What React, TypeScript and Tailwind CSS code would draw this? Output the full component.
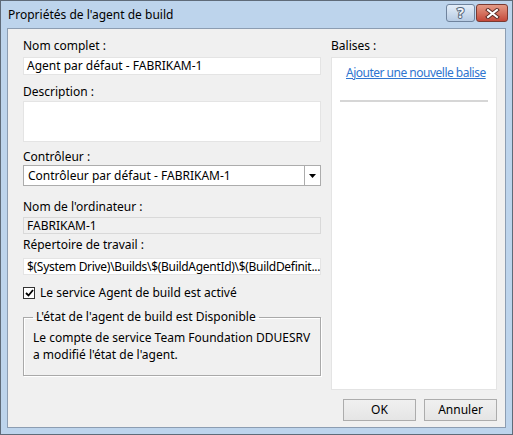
import React from 'react';

const font = 'font-["Noto_Sans","Liberation_Sans",sans-serif] text-[12px]';

function Label({ children, className = '' }: { children: React.ReactNode; className?: string }) {
  return <div className={`h-[16px] leading-[16px] text-black ${className}`}>{children}</div>;
}

export default function App() {
  return (
    <div className={`w-[513px] h-[435px] border border-[#5f6b79] bg-[#bdd4ec] flex flex-col ${font}`}>
      {/* title bar */}
      <div className="h-[27px] flex items-start pl-[7px] pr-[4px]">
        <div className="flex-1 h-[27px] leading-[27px] text-black">Propriétés de l'agent de build</div>
        <div className="flex gap-[1px] mt-[3px]">
          <button className="w-[29px] h-[18px] rounded-[3px] border border-[#6f839d] bg-gradient-to-b from-[#e4eef9] to-[#b7cbe3] flex items-center justify-center">
            <span className="font-bold text-[14px] leading-none text-[#eef2f7] [-webkit-text-stroke:2px_#56667a] [paint-order:stroke]">?</span>
          </button>
          <button className="w-[32px] h-[18px] rounded-[3px] border border-[#7a3a32] bg-gradient-to-b from-[#e39a86] to-[#c4483a] flex items-center justify-center">
            <svg width="15" height="11" viewBox="0 0 15 11">
              <path d="M3 2 L12 9 M12 2 L3 9" stroke="#5a2a24" strokeWidth="4" strokeLinecap="square" />
              <path d="M3 2 L12 9 M12 2 L3 9" stroke="#ffffff" strokeWidth="2" strokeLinecap="square" />
            </svg>
          </button>
        </div>
      </div>

      {/* content */}
      <div className="mx-[6px] mb-[6px] flex-1 border border-[#8c9db2] bg-[#f0f0f0] flex flex-col">
        <div className="h-[361px] flex pl-[15px] pr-[8px]">
          {/* left column */}
          <div className="w-[298px] flex flex-col">
            <Label className="mt-[9px]">Nom complet :</Label>
            <div className="mt-[3px] h-[18px] bg-white border border-[#e4e4e4] px-[3px] leading-[16px] text-black">
              Agent par défaut - FABRIKAM-1
            </div>

            <Label className="mt-[9px]">Description :</Label>
            <div className="mt-[1px] h-[41px] bg-white border border-[#e4e4e4]" />

            <Label className="mt-[7px]">Contrôleur :</Label>
            <div className="h-[21px] bg-white border border-[#acacac] flex">
              <div className="flex-1 px-[4px] leading-[19px] text-black">Contrôleur par défaut - FABRIKAM-1</div>
              <div className="w-[16px] border-l border-[#acacac] flex items-center justify-center">
                <svg width="7" height="4" viewBox="0 0 7 4">
                  <path d="M0 0 H7 L3.5 4 Z" fill="#000" />
                </svg>
              </div>
            </div>

            <Label className="mt-[13px]">Nom de l'ordinateur :</Label>
            <div className="mt-[2px] h-[17px] bg-[#f0f0f0] border border-[#d9d9d9] px-[3px] leading-[15px] text-black">
              FABRIKAM-1
            </div>

            <Label className="mt-[3px]">Répertoire de travail :</Label>
            <div className="mt-[5px] h-[17px] bg-white border border-[#e4e4e4] px-[3px] leading-[15px] text-black whitespace-nowrap overflow-hidden tracking-[-0.3px]">
              $(System Drive)\Builds\$(BuildAgentId)\$(BuildDefinit...
            </div>

            <div className="mt-[10px] h-[16px] flex items-center gap-[5px]">
              <div className="w-[12px] h-[12px] border border-[#333] bg-white flex items-center justify-center">
                <svg width="9" height="8" viewBox="0 0 9 8">
                  <path d="M1 4 L3.5 6.5 L8 1" stroke="#000" strokeWidth="1.8" fill="none" />
                </svg>
              </div>
              <span className="leading-[16px] text-black">Le service Agent de build est activé</span>
            </div>

            <fieldset className="mt-[8px] h-[67px] border border-[#a9a9a9] shadow-[inset_1px_1px_0_#fff,1px_1px_0_#fff] px-[9px]">
              <legend className="px-[3px] leading-[16px] text-black">L'état de l'agent de build est Disponible</legend>
              <div className="mt-[4px] leading-[17px] text-black">
                Le compte de service Team Foundation DDUESRV
                <br />
                a modifié l'état de l'agent.
              </div>
            </fieldset>
          </div>

          {/* right column */}
          <div className="w-[166px] ml-[10px] flex flex-col">
            <Label className="mt-[9px]">Balises :</Label>
            <div className="mt-[3px] flex-1 bg-white border border-[#e4e4e4] flex flex-col">
              <a className="mt-[7px] ml-[14px] leading-[16px] text-[#2f75d0] underline whitespace-nowrap tracking-[-0.5px] cursor-pointer">Ajouter une nouvelle balise</a>
              <div className="mt-[19px] mx-[8px] h-[2px] bg-[#d6d6d6]" />
            </div>
          </div>
        </div>

        {/* buttons */}
        <div className="mt-[9px] flex justify-end gap-[8px] pr-[8px]">
          <button className="w-[73px] h-[22px] border border-[#acacac] bg-gradient-to-b from-[#f0f0f0] to-[#e5e5e5] text-black">OK</button>
          <button className="w-[73px] h-[22px] border border-[#acacac] bg-gradient-to-b from-[#f0f0f0] to-[#e5e5e5] text-black">Annuler</button>
        </div>
      </div>
    </div>
  );
}
